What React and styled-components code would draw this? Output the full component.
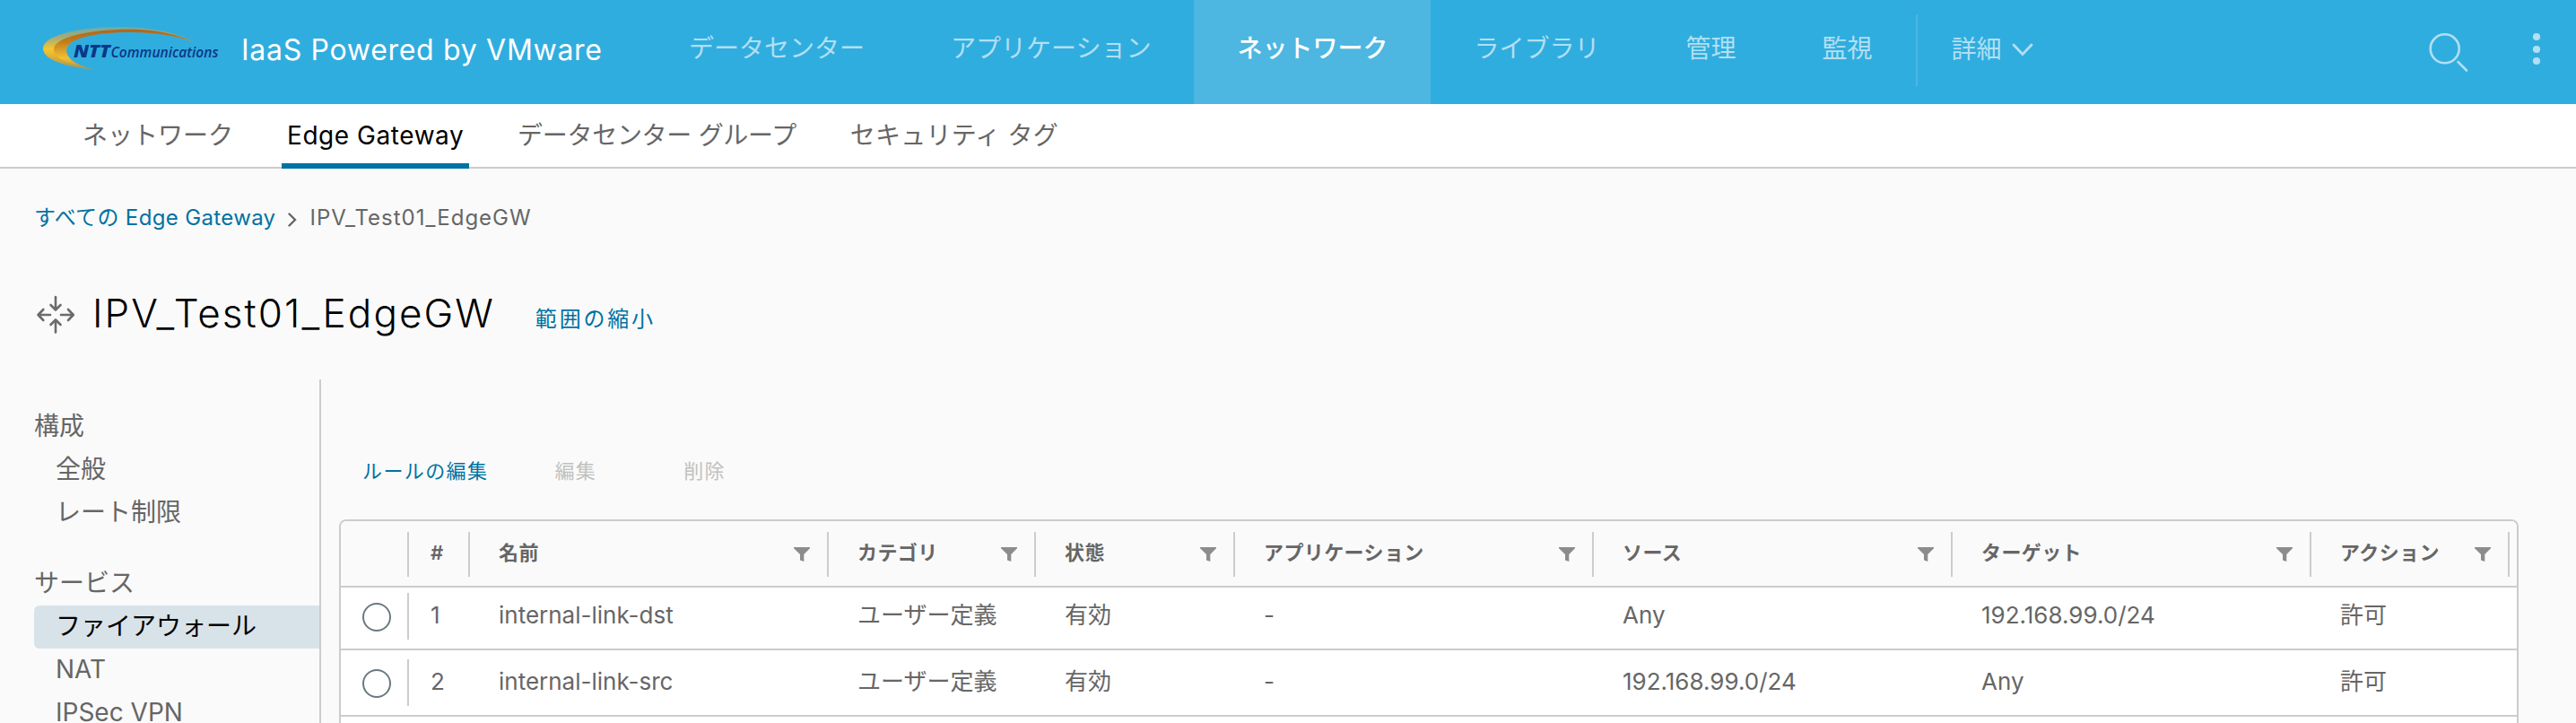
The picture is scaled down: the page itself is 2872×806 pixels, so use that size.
import { useState } from "react";
import styled, { createGlobalStyle, css } from "styled-components";

const GlobalStyle = createGlobalStyle`
  * {
    box-sizing: border-box;
  }

  body {
    margin: 0;
    background: #fafafa;
    color: #666;
    font-family: Inter, "Noto Sans CJK JP", sans-serif;
    overflow: hidden;
  }
`;

const Page = styled.div`
  display: flex;
  flex-direction: column;
  height: 806px;
  overflow: hidden;
  white-space: nowrap;
`;

const Header = styled.header`
  display: flex;
  flex: none;
  height: 116px;
  background: #30addf;
`;

const Brand = styled.div`
  display: flex;
  width: 720px;
  padding-left: 46px;
`;

const LogoSvg = styled.svg`
  flex: none;
  overflow: visible;
`;

const BrandName = styled.span`
  margin-left: 19px;
  color: #fff;
  font-size: 32px;
  line-height: 111px;
  letter-spacing: 0.7px;
`;

const MainNav = styled.nav`
  display: flex;
`;

const MainNavItem = styled.a`
  padding: 0 48px;
  color: ${({ $active }) => ($active ? "#fff" : "#b2dff2")};
  background: ${({ $active }) => ($active ? "#4db6e1" : "transparent")};
  font-size: 28px;
  font-weight: ${({ $active }) => ($active ? 500 : 400)};
  line-height: 109px;
`;

const MoreMenu = styled.a`
  display: flex;
  align-items: center;
  gap: 11px;
  height: 80px;
  margin-top: 16px;
  padding-left: 38px;
  border-left: 2px solid #4db6e1;
  color: #b2dff2;
  font-size: 28px;
  line-height: 28px;

  span {
    margin-bottom: 3px;
  }
`;

const HeaderActions = styled.div`
  display: flex;
  margin-left: auto;
`;

const SubNav = styled.nav`
  display: flex;
  flex: none;
  gap: 48px;
  height: 72px;
  padding-left: 86px;
  background: #fff;
  border-bottom: 2px solid #ccc;
`;

const SubNavItem = styled.a`
  height: 72px;
  padding: 0 6px;
  font-size: 28px;
  line-height: 70px;
  letter-spacing: ${({ $spacing }) => $spacing || 0}px;

  ${({ $active }) =>
    $active &&
    css`
      width: 209px;
      color: #000;
      border-bottom: 6px solid #0072a3;
    `}
`;

const Breadcrumb = styled.div`
  display: flex;
  flex: none;
  align-items: center;
  padding: 37px 0 0 38px;
  font-size: 24px;
  line-height: 36px;

  a {
    color: #0072a3;
    letter-spacing: 0.35px;
  }

  svg {
    margin: 3px 14px 0 14px;
  }

  span {
    letter-spacing: 1px;
  }
`;

const TitleBar = styled.div`
  display: flex;
  flex: none;
  margin: 58px 0 0 40px;
  height: 104px;
`;

const Title = styled.h1`
  margin: 0 0 0 19px;
  color: #000;
  font-size: 44px;
  font-weight: 300;
  line-height: 60px;
  letter-spacing: 2.05px;
`;

const TextLink = styled.a`
  margin-left: 45px;
  color: #0072a3;
  font-size: 24px;
  line-height: 74px;
  letter-spacing: 2.8px;
`;

const Columns = styled.div`
  display: flex;
  flex: 1;
`;

const SideNav = styled.nav`
  width: 320px;
  margin-left: 38px;
  padding-top: 28px;
  border-right: 2px solid #ccc;
  font-size: 28px;
`;

const SideGroup = styled.div`
  margin-bottom: 32px;
  line-height: ${({ $first }) => ($first ? 49 : 46)}px;
`;

const SideHeading = styled.div`
  height: 48px;
`;

const SideItem = styled.div`
  height: 48px;
  padding-left: 24px;
  border-radius: 6px 0 0 6px;
  color: ${({ $active }) => ($active ? "#000" : "inherit")};
  background: ${({ $active }) => ($active ? "#d8e3e9" : "transparent")};
`;

const Main = styled.main`
  display: flex;
  flex-direction: column;
  width: 2430px;
  margin-left: 20px;
  padding-top: 84px;
`;

const Toolbar = styled.div`
  display: flex;
  gap: 74px;
  padding-left: 26px;
  margin-bottom: 36px;
`;

const ToolbarButton = styled.button`
  padding: 0;
  border: 0;
  background: none;
  color: #0072a3;
  font-family: inherit;
  font-size: 22px;
  line-height: 36px;
  letter-spacing: 1.4px;

  &:disabled {
    color: #c1c1c1;
    padding-right: 23px;
  }
`;

const Grid = styled.div`
  flex: 1;
  border: 2px solid #ccc;
  border-bottom: 0;
  border-radius: 8px 8px 0 0;
  background: #fff;
  overflow: hidden;
`;

const row = css`
  display: grid;
  grid-template-columns: 76px 68px 400px 231px 222px 400px 400px 400px 221px;
  grid-template-rows: 100%;
  border-bottom: 2px solid #ccc;
`;

const HeadRow = styled.div`
  ${row}
  height: 74px;
  padding: 12px 0 10px;
  background: #fafafa;
`;

const HeadCell = styled.div`
  display: flex;
  align-items: center;
  justify-content: space-between;
  padding: 0 19px 0 ${({ $narrow }) => ($narrow ? 24 : 32)}px;
  border-right: 2px solid #ccc;
  font-size: 22px;
  font-weight: 600;
  line-height: 22px;
  letter-spacing: 0.4px;

  span {
    margin-bottom: 4px;
  }
`;

/* the first row is shorter, its cells stay aligned to the bottom edge */
const Row = styled.div`
  ${row}
  align-items: end;
  height: ${({ $first }) => ($first ? 70 : 74)}px;
`;

const Cell = styled.div`
  height: 72px;
  padding-left: ${({ $narrow }) => ($narrow ? 24 : 32)}px;
  font-size: 26px;
  line-height: 69px;
`;

const SelectCell = styled.div`
  height: 52px;
  margin-bottom: 10px;
  padding: 11px 0 0 24px;
  border-right: 2px solid #ccc;
`;

const Radio = styled.div`
  width: 32px;
  height: 32px;
  border: 2px solid #6a7a81;
  border-radius: 50%;
  background: #fff;
`;

const mainNav = [
  "データセンター",
  "アプリケーション",
  "ネットワーク",
  "ライブラリ",
  "管理",
  "監視",
];

const subNav = [
  { name: "ネットワーク" },
  { name: "Edge Gateway", spacing: 0.55 },
  { name: "データセンター グループ", spacing: -0.28 },
  { name: "セキュリティ タグ", spacing: 0.2 },
];

const sideNav = [
  { heading: "構成", items: ["全般", "レート制限"] },
  { heading: "サービス", items: ["ファイアウォール", "NAT", "IPSec VPN"] },
];

const columns = [
  "名前",
  "カテゴリ",
  "状態",
  "アプリケーション",
  "ソース",
  "ターゲット",
  "アクション",
];

const rules = [
  ["internal-link-dst", "ユーザー定義", "有効", "-", "Any", "192.168.99.0/24", "許可"],
  ["internal-link-src", "ユーザー定義", "有効", "-", "192.168.99.0/24", "Any", "許可"],
];

function Logo() {
  return (
    <LogoSvg width="204" height="116" viewBox="46 0 204 116">
      <defs>
        <linearGradient id="outer" x1="0" y1="0" x2="0" y2="1">
          <stop offset="0" stopColor="#6fa9a8" />
          <stop offset="0.25" stopColor="#a5ad76" />
          <stop offset="0.52" stopColor="#f6c62f" />
          <stop offset="0.75" stopColor="#d9aa35" />
          <stop offset="1" stopColor="#8a9a78" />
        </linearGradient>
        <linearGradient id="inner" x1="0" y1="0" x2="0" y2="1">
          <stop offset="0" stopColor="#b0661a" />
          <stop offset="0.3" stopColor="#c07c1c" />
          <stop offset="0.72" stopColor="#f3c030" />
          <stop offset="1" stopColor="#b08a3c" />
        </linearGradient>
      </defs>
      <path
        fill="url(#outer)"
        d="M107 77.8C72 75 48 66 48 54C48 40 86 30 133 30C169 30 199 37 216 47C196 39 170 35.5 145 35.5C104 35.5 74 43 74 56C74 66 87 74 107 77.8Z"
      />
      <path
        fill="url(#inner)"
        d="M105 77.2C77 73 60 65 60 55C60 41.5 100 32.8 144 32.8C174 32.8 200 38.5 216 47C196 39.5 171 36 147 36C104 36 74 43.5 74 56C74 66 86 73.5 105 77.2Z"
      />
      <g fill="#0b3788" fontFamily="Open Sans" fontStyle="italic">
        <text x="82" y="64" fontSize="19" fontWeight="800" textLength="41" lengthAdjust="spacingAndGlyphs">
          NTT
        </text>
        <text x="123.5" y="64" fontSize="17" fontWeight="600" textLength="120" lengthAdjust="spacingAndGlyphs">
          Communications
        </text>
      </g>
    </LogoSvg>
  );
}

function EdgeIcon() {
  return (
    <svg
      width="44"
      height="64"
      viewBox="40 319 44 64"
      fill="none"
      stroke="#6b6b6b"
      strokeWidth="2.6"
      strokeLinecap="round"
      strokeLinejoin="round"
    >
      <path d="M62 331V345M56.5 340L62 345.5L67.5 340" />
      <path d="M62 370.5V357M56.5 362L62 356.5L67.5 362" />
      <path d="M56 351H43M48.3 345L42.5 351L48.3 357" />
      <path d="M68 351H81M76 345L81.8 351L76 357" />
    </svg>
  );
}

function FilterIcon() {
  return (
    <svg width="18" height="16" viewBox="0 0 18 16">
      <path fill="#8c8c8c" d="M0 0H18V1.2L11.3 8V16L7 14.4V8L0 1.2Z" />
    </svg>
  );
}

export default function App() {
  const [activeNav] = useState("ネットワーク");
  const [activeTab] = useState("Edge Gateway");
  const [activeItem] = useState("ファイアウォール");

  return (
    <Page>
      <GlobalStyle />
      <Header>
        <Brand>
          <Logo />
          <BrandName>IaaS Powered by VMware</BrandName>
        </Brand>
        <MainNav>
          {mainNav.map((name) => (
            <MainNavItem key={name} $active={name === activeNav}>
              {name}
            </MainNavItem>
          ))}
          <MoreMenu>
            <span>詳細</span>
            <svg width="24" height="16" viewBox="0 0 24 16" fill="none">
              <path d="M2 2L12 12.5L22 2" stroke="#b2dff2" strokeWidth="2.8" strokeLinecap="round" />
            </svg>
          </MoreMenu>
        </MainNav>
        <HeaderActions>
          <svg width="164" height="116" viewBox="2708 0 164 116">
            <g fill="none" stroke="#b2dff2" strokeWidth="2.6">
              <circle cx="2725.7" cy="54.3" r="16" />
              <path d="M2740.5 69L2750 78.5" strokeLinecap="round" />
            </g>
            <g fill="#b2dff2">
              <circle cx="2828" cy="41" r="4.1" />
              <circle cx="2828" cy="55" r="4.1" />
              <circle cx="2828" cy="68" r="4.1" />
            </g>
          </svg>
        </HeaderActions>
      </Header>
      <SubNav>
        {subNav.map(({ name, spacing }) => (
          <SubNavItem key={name} $active={name === activeTab} $spacing={spacing}>
            {name}
          </SubNavItem>
        ))}
      </SubNav>
      <Breadcrumb>
        <a>すべての Edge Gateway</a>
        <svg width="10" height="16" viewBox="0 0 10 16" fill="none">
          <path d="M1.5 1.5L8 8L1.5 14.5" stroke="#666" strokeWidth="2.4" strokeLinecap="round" />
        </svg>
        <span>IPV_Test01_EdgeGW</span>
      </Breadcrumb>
      <TitleBar>
        <EdgeIcon />
        <Title>IPV_Test01_EdgeGW</Title>
        <TextLink>範囲の縮小</TextLink>
      </TitleBar>
      <Columns>
        <SideNav>
          {sideNav.map(({ heading, items }, index) => (
            <SideGroup key={heading} $first={index === 0}>
              <SideHeading>{heading}</SideHeading>
              {items.map((name) => (
                <SideItem key={name} $active={name === activeItem}>
                  {name}
                </SideItem>
              ))}
            </SideGroup>
          ))}
        </SideNav>
        <Main>
          <Toolbar>
            <ToolbarButton>ルールの編集</ToolbarButton>
            <ToolbarButton disabled>編集</ToolbarButton>
            <ToolbarButton disabled>削除</ToolbarButton>
          </Toolbar>
          <Grid>
            <HeadRow>
              <HeadCell />
              <HeadCell $narrow>
                <span>#</span>
              </HeadCell>
              {columns.map((name) => (
                <HeadCell key={name}>
                  <span>{name}</span>
                  <FilterIcon />
                </HeadCell>
              ))}
            </HeadRow>
            {rules.map((cells, index) => (
              <Row key={cells[0]} $first={index === 0}>
                <SelectCell>
                  <Radio />
                </SelectCell>
                <Cell $narrow>{index + 1}</Cell>
                {cells.map((value, i) => (
                  <Cell key={columns[i]}>{value}</Cell>
                ))}
              </Row>
            ))}
          </Grid>
        </Main>
      </Columns>
    </Page>
  );
}
